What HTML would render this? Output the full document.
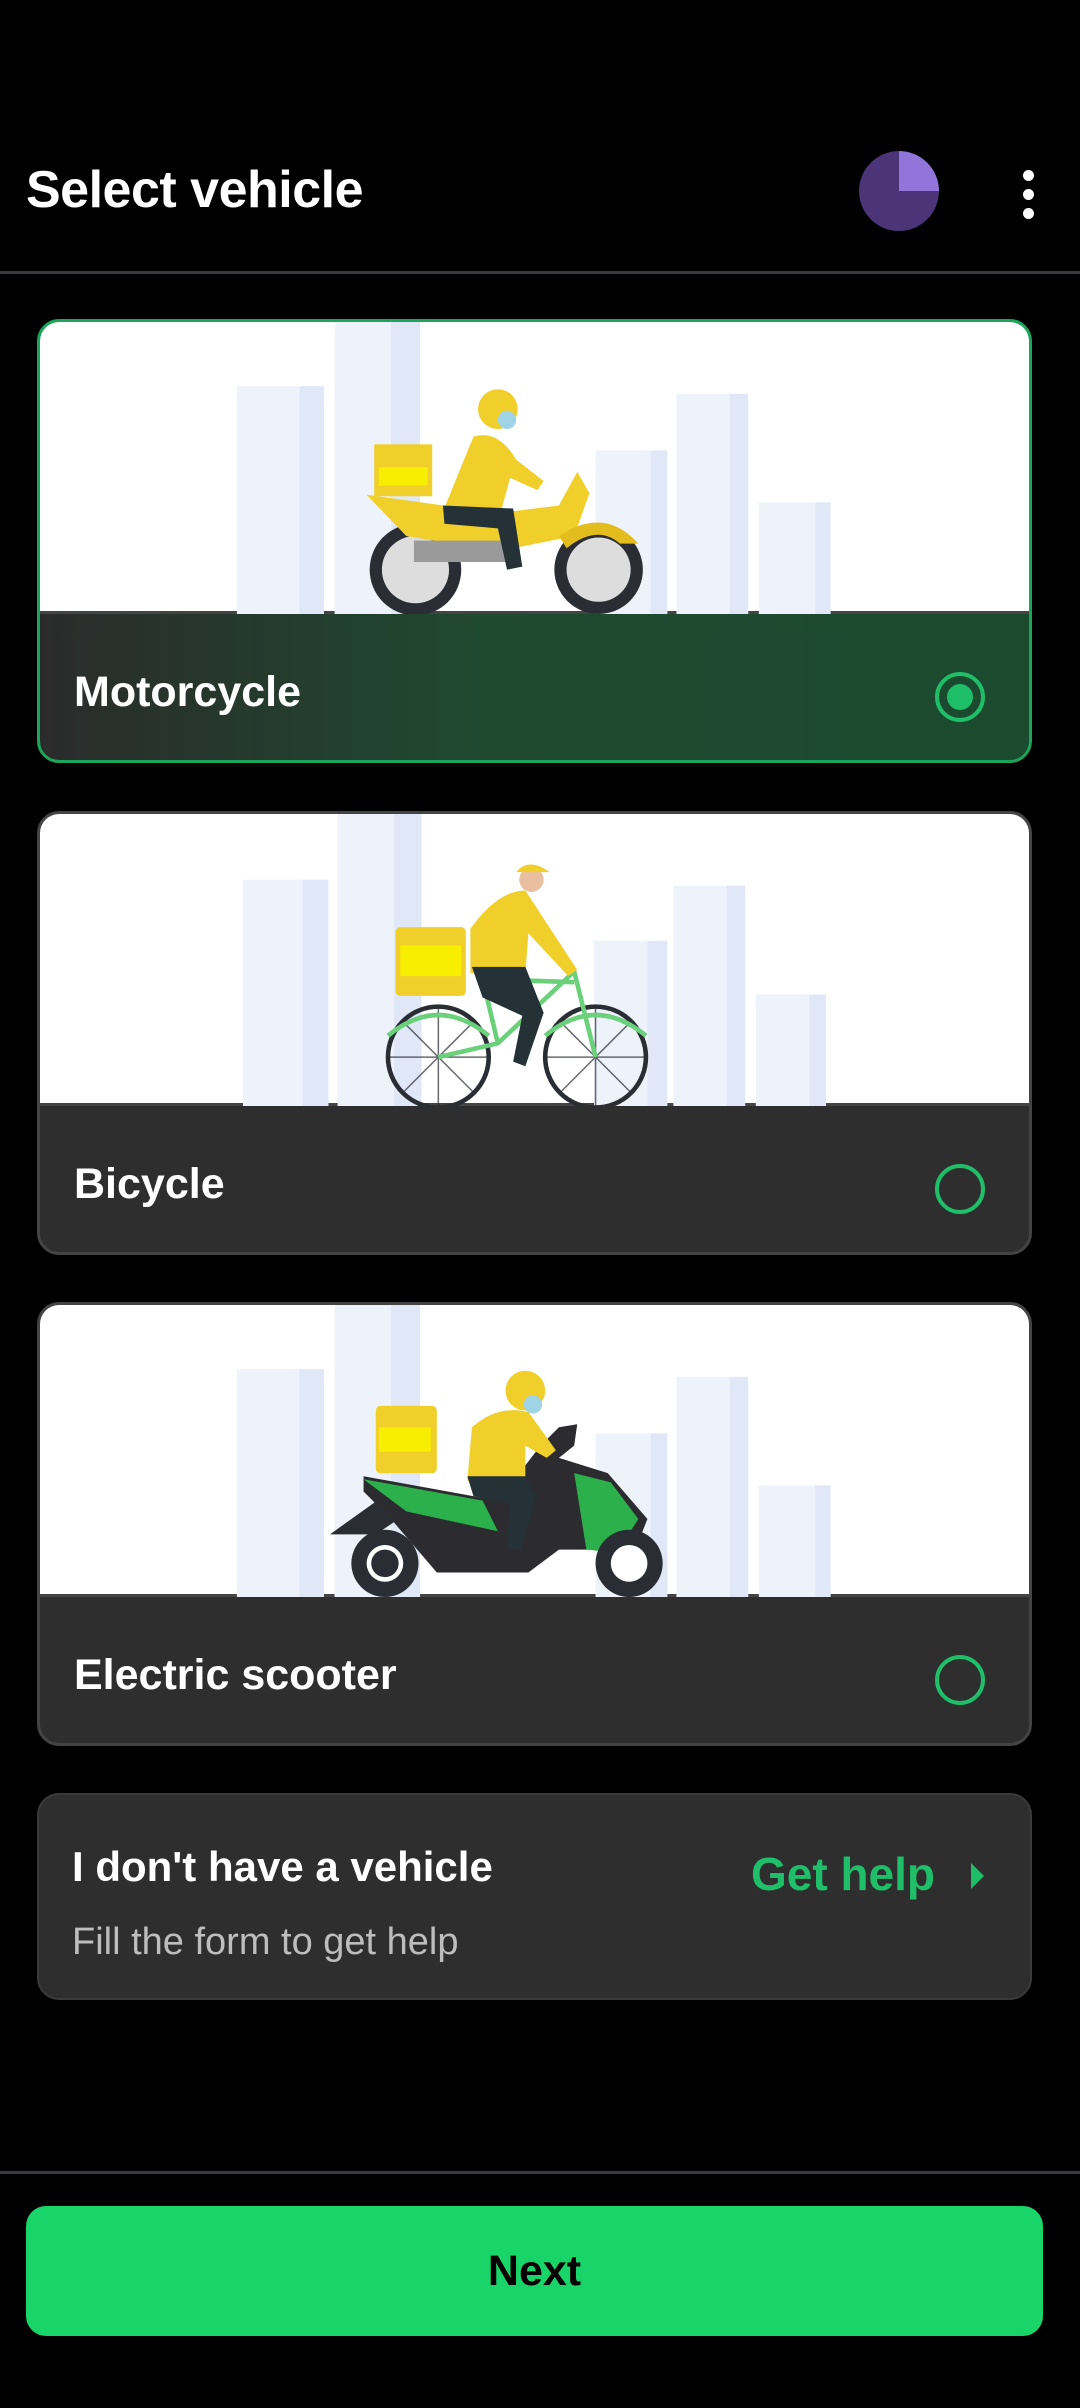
<!DOCTYPE html>
<html><head><meta charset="utf-8"><style>
*{margin:0;padding:0;box-sizing:border-box}
body{width:1080px;height:2408px;background:#000;font-family:"Liberation Sans",sans-serif;position:relative;overflow:hidden;color:#fff}
.title{position:absolute;left:26px;top:160px;font-size:52px;font-weight:bold;letter-spacing:-0.5px}
.avatar{position:absolute;left:859px;top:151px;width:80px;height:80px;border-radius:50%;background:conic-gradient(#9275db 0 25%,#4b3478 25% 100%)}
.dots{position:absolute;left:1023px;top:170px;width:12px}
.dots i{display:block;width:11px;height:11px;border-radius:50%;background:#fff;margin-bottom:8px}
.hr{position:absolute;left:0;width:1080px;height:3px;background:#3a3a3c}
.card{position:absolute;left:37px;width:995px;height:444px;border-radius:22px;border:3px solid #444;background:#2e2e2e;overflow:hidden}
.card.sel{border-color:#1aa65a;background:linear-gradient(90deg,#2b2b2b 0%,#1f4a30 45%,#1b4a2f 100%)}
.img{position:absolute;left:0;top:0;width:100%;height:292px;background:#fff;border-bottom:3px solid #444}
.img svg{display:block;width:989px;height:292px}
.lbl{position:absolute;left:34px;top:346px;font-size:43px;font-weight:bold}
.radio{position:absolute;left:895px;top:350px;width:50px;height:50px;border-radius:50%;border:4px solid #1fbf6a}
.sel .radio::after{content:"";position:absolute;left:8px;top:8px;width:26px;height:26px;border-radius:50%;background:#1fbf6a}
.help{position:absolute;left:37px;top:1793px;width:995px;height:207px;border-radius:22px;background:#2e2e2e;border:2px solid #3a3a3a}
.help .t{position:absolute;left:33px;top:48px;font-size:42px;font-weight:bold}
.help .s{position:absolute;left:33px;top:126px;font-size:38px;color:#bdbdbd}
.help .g{position:absolute;left:712px;top:52px;font-size:46px;font-weight:bold;color:#1fbf6a}
.help .a{position:absolute;left:932px;top:68px;width:0;height:0;border-top:13px solid transparent;border-bottom:13px solid transparent;border-left:13px solid #1fbf6a}
.btn{position:absolute;left:26px;top:2206px;width:1017px;height:130px;border-radius:20px;background:#19d468;color:#000;font-size:43px;font-weight:bold;text-align:center;line-height:130px}
</style></head><body>
<div class="title">Select vehicle</div>
<div class="avatar"></div>
<div class="dots"><i></i><i></i><i></i></div>
<div class="hr" style="top:271px"></div>

<div class="card sel" style="top:319px">
 <div class="img"><svg viewBox="0 0 648 191" preserveAspectRatio="none">
  <g fill="#eef2fb"><rect x="129" y="42" width="57" height="150"/><rect x="193" y="0" width="56" height="192"/><rect x="364" y="84" width="47" height="108"/><rect x="417" y="47" width="47" height="145"/><rect x="471" y="118" width="47" height="74"/></g>
  <g fill="#e0e8f8"><rect x="170" y="42" width="16" height="150"/><rect x="230" y="0" width="19" height="192"/><rect x="400" y="84" width="11" height="108"/><rect x="452" y="47" width="12" height="145"/><rect x="508" y="118" width="10" height="74"/></g>
  <circle cx="246" cy="162" r="30" fill="#2a2d34"/><circle cx="246" cy="162" r="22" fill="#ddd"/>
  <circle cx="366" cy="162" r="29" fill="#2a2d34"/><circle cx="366" cy="162" r="21" fill="#ddd"/>
  <path d="M214 113 L300 125 L340 120 L352 98 L360 112 L350 140 L300 150 L240 140 Z" fill="#f1cf2a"/>
  <path d="M340 140 Q370 120 392 145 L380 145 Q365 132 345 148Z" fill="#e3bd1e"/>
  <rect x="245" y="143" width="60" height="14" fill="#9a9a9a"/>
  <rect x="219" y="80" width="38" height="34" fill="#f1cf2a"/><rect x="222" y="95" width="32" height="12" fill="#f7ee00"/>
  <path d="M284 75 Q300 70 312 90 L330 104 L326 110 L308 102 L302 124 L264 124 Z" fill="#f1cf2a"/>
  <path d="M264 120 L310 122 L316 160 L306 162 L300 135 L265 132Z" fill="#243136"/>
  <circle cx="300" cy="57" r="13" fill="#f1cf2a"/><circle cx="306" cy="64" r="6" fill="#9fd3e6"/>
 </svg></div>
 <div class="lbl">Motorcycle</div><div class="radio"></div>
</div>

<div class="card" style="top:811px">
 <div class="img"><svg viewBox="0 0 648 191" preserveAspectRatio="none">
  <g fill="#eef2fb"><rect x="133" y="43" width="56" height="149"/><rect x="195" y="0" width="55" height="192"/><rect x="363" y="83" width="48" height="109"/><rect x="415" y="47" width="47" height="145"/><rect x="469" y="118" width="46" height="74"/></g>
  <g fill="#e0e8f8"><rect x="172" y="43" width="17" height="149"/><rect x="232" y="0" width="18" height="192"/><rect x="398" y="83" width="13" height="109"/><rect x="450" y="47" width="12" height="145"/><rect x="504" y="118" width="11" height="74"/></g>
  <circle cx="261" cy="159" r="33" fill="none" stroke="#2a2d34" stroke-width="3"/><circle cx="364" cy="159" r="33" fill="none" stroke="#2a2d34" stroke-width="3"/>
  <g stroke="#2a2d34" stroke-width="1" opacity=".7"><path d="M228 159H294M261 126V192M238 136L284 182M284 136L238 182M331 159H397M364 126V192M341 136L387 182M387 136L341 182"/></g>
  <path d="M261 159 L300 150 L350 103 L364 159 M300 150 L290 108 L350 110 M228 145 Q261 118 294 145 M331 145 Q364 118 397 145" fill="none" stroke="#6ad07a" stroke-width="3"/>
  <rect x="233" y="74" width="46" height="45" rx="3" fill="#f1cf2a"/><rect x="236" y="86" width="40" height="20" fill="#f7ee00"/>
  <path d="M282 75 Q300 50 318 50 L352 102 L346 106 L320 78 L318 104 L282 104Z" fill="#f1cf2a"/>
  <path d="M283 100 L318 100 L330 130 L318 165 L310 162 L316 132 L290 120Z" fill="#243136"/>
  <circle cx="322" cy="43" r="8" fill="#e8bfa0"/><path d="M312 38 Q320 28 334 38Z" fill="#f1cf2a"/>
 </svg></div>
 <div class="lbl">Bicycle</div><div class="radio"></div>
</div>

<div class="card" style="top:1302px">
 <div class="img"><svg viewBox="0 0 648 191" preserveAspectRatio="none">
  <g fill="#eef2fb"><rect x="129" y="42" width="57" height="150"/><rect x="193" y="0" width="56" height="192"/><rect x="364" y="84" width="47" height="108"/><rect x="417" y="47" width="47" height="145"/><rect x="471" y="118" width="47" height="74"/></g>
  <g fill="#e0e8f8"><rect x="170" y="42" width="16" height="150"/><rect x="230" y="0" width="19" height="192"/><rect x="400" y="84" width="11" height="108"/><rect x="452" y="47" width="12" height="145"/><rect x="508" y="118" width="10" height="74"/></g>
  <path d="M190 150 L232 120 L250 130 L220 150Z" fill="#2a2d34"/>
  <path d="M212 112 L300 128 L328 92 L340 80 L352 78 L350 92 L340 100 L372 110 L398 140 L390 160 L340 160 L320 175 L260 175 L230 140 L212 122Z" fill="#2c2c30"/>
  <path d="M212 114 L290 128 L300 148 L240 135Z" fill="#2cb04c"/>
  <path d="M350 110 L374 116 L392 140 L378 162 L358 160Z" fill="#2cb04c"/>
  <circle cx="226" cy="169" r="22" fill="#2a2d34"/><circle cx="226" cy="169" r="12" fill="#fff"/><circle cx="226" cy="169" r="9" fill="#2a2d34"/>
  <circle cx="386" cy="169" r="22" fill="#2a2d34"/><circle cx="386" cy="169" r="12" fill="#fff"/>
  <rect x="220" y="66" width="40" height="44" rx="3" fill="#f1cf2a"/><rect x="222" y="80" width="34" height="16" fill="#f7ee00"/>
  <path d="M283 80 Q300 65 320 70 L338 95 L332 100 L318 92 L318 118 L280 115Z" fill="#f1cf2a"/>
  <path d="M280 112 L318 112 L325 125 L315 160 L306 160 L308 130 L284 125Z" fill="#243136"/>
  <circle cx="318" cy="56" r="13" fill="#f1cf2a"/><circle cx="323" cy="65" r="6" fill="#9fd3e6"/>
 </svg></div>
 <div class="lbl">Electric scooter</div><div class="radio"></div>
</div>

<div class="help"><div class="t">I don't have a vehicle</div><div class="s">Fill the form to get help</div><div class="g">Get help</div><div class="a"></div></div>

<div class="hr" style="top:2171px"></div>
<div class="btn">Next</div>
</body></html>
